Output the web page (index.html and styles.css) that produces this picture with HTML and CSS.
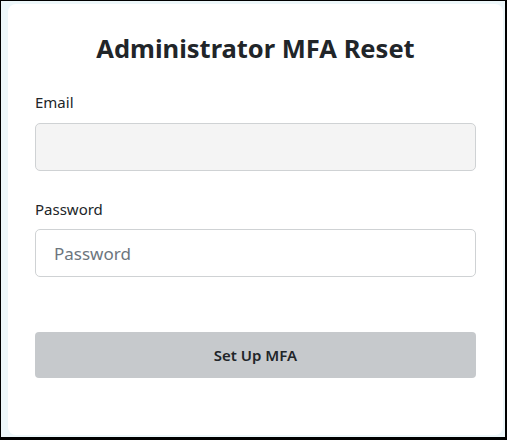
FILE: index.html
```html
<!DOCTYPE html>
<html lang="en">
<head>
<meta charset="utf-8">
<title>Administrator MFA Reset</title>
<link rel="stylesheet" href="styles.css">
</head>
<body>
<div class="frame">
  <main class="card">
    <h1 class="title">Administrator MFA Reset</h1>
    <form class="form">
      <label class="label" for="email">Email</label>
      <input class="input input-readonly" id="email" type="email" readonly>
      <label class="label label-gap" for="password">Password</label>
      <input class="input" id="password" type="password" placeholder="Password">
      <button class="button" type="button">Set Up MFA</button>
    </form>
  </main>
</div>
</body>
</html>
```

FILE: styles.css
```css
* { box-sizing: border-box; }
html, body { margin: 0; padding: 0; height: 100%; }
body {
  font-family: "Noto Sans", "Open Sans", sans-serif;
  color: #212529;
  background: #000;
}
.frame {
  height: 100%;
  border-style: solid;
  border-color: #000;
  border-width: 1px 2px 3px 1px;
  background: #edf7fa;
  padding: 3px 2px 2px 7px;
  display: flex;
}
.card {
  flex: 1;
  background: #fff;
  border-radius: 8px;
  padding: 29px 27px 0 27px;
}
.title {
  margin: 0;
  text-align: center;
  font-size: 25.5px;
  line-height: 30px;
  font-weight: 700;
  color: #212529;
}
.form {
  display: flex;
  flex-direction: column;
  margin-top: 27px;
}
.label {
  font-size: 15px;
  line-height: 24px;
  margin-bottom: 9px;
}
.label-gap { margin-top: 26px; margin-bottom: 8px; }
.input {
  height: 48px;
  width: 100%;
  border: 1px solid #cfd2d4;
  border-radius: 5px;
  background: #fff;
  padding: 0 18px;
  font-family: inherit;
  font-size: 17px;
  color: #212529;
}
.input-readonly { background: #f4f4f4; }
.input::placeholder { color: #6c757d; }
.button {
  margin-top: 55px;
  height: 46px;
  width: 100%;
  border: none;
  border-radius: 4px;
  background: #c6c9cc;
  font-family: inherit;
  font-size: 15px;
  font-weight: 600;
  color: #212529;
}
```
